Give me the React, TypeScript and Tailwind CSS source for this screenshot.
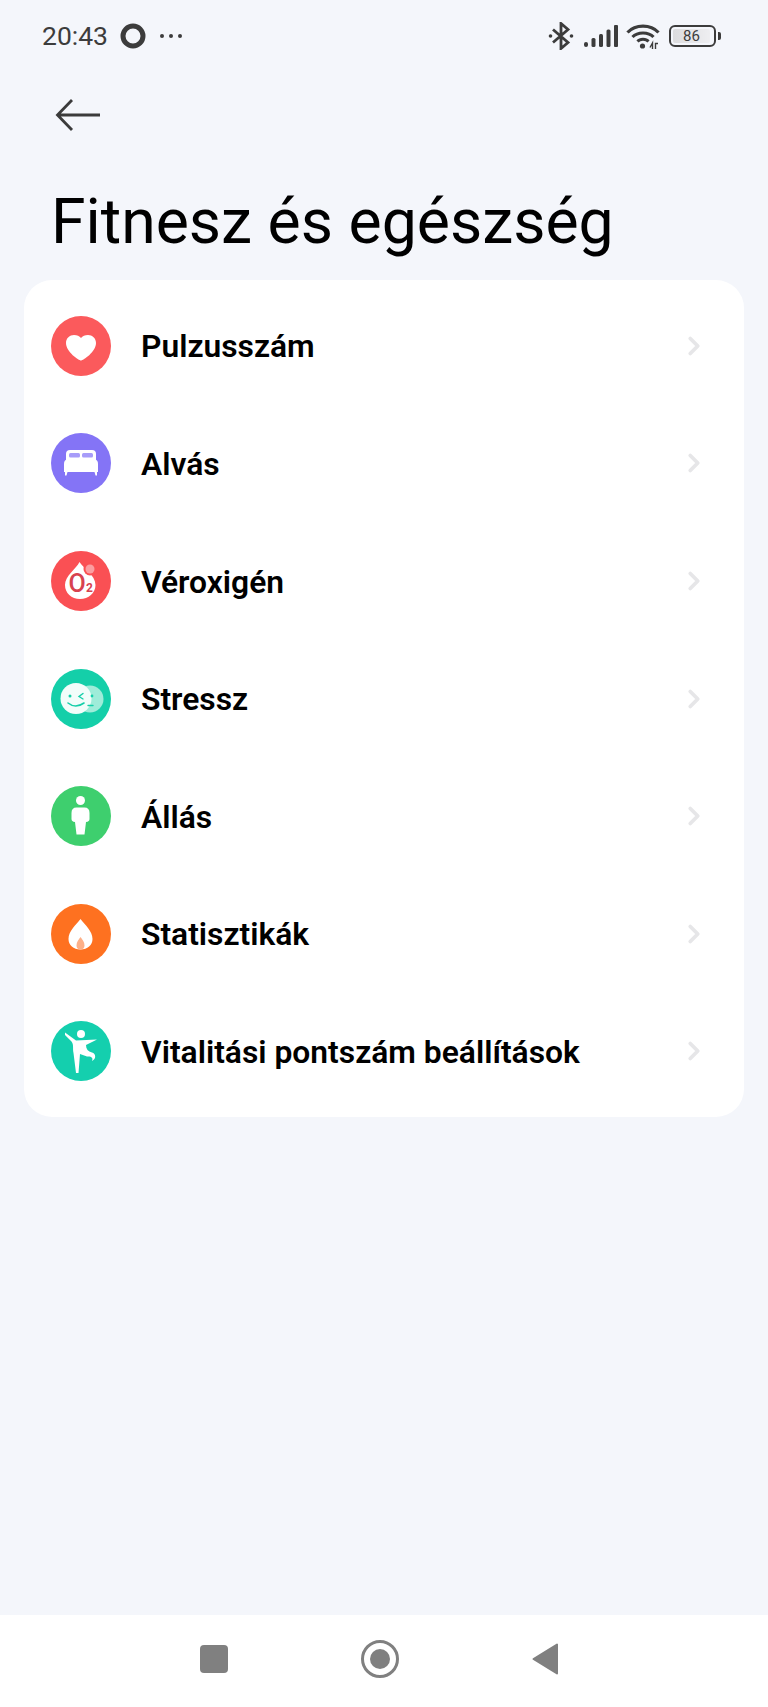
import React from 'react';
import { ChevronRight } from 'lucide-react';

const HeartIcon = () => (
  <svg viewBox="0 0 60 60" className="w-[60px] h-[60px]">
    <circle cx="30" cy="30" r="30" fill="#fb5a5c" />
    <path d="M30 44.5C28 44.5 15 36 15 27C15 22 18.8 19 23 19C26 19 28.5 20 30 22C31.5 20 34 19 37 19C41.2 19 45 22 45 27C45 36 32 44.5 30 44.5Z" fill="#fff" />
  </svg>
);

const BedIcon = () => (
  <svg viewBox="0 0 60 60" className="w-[60px] h-[60px]">
    <circle cx="30" cy="30" r="30" fill="#8474f6" />
    <path d="M15 21Q15 17 19 17H41Q45 17 45 21V27H15Z" fill="#fff" />
    <rect x="18" y="20" width="11" height="4.5" rx="1.5" fill="#a79cf9" />
    <rect x="31" y="20" width="11" height="4.5" rx="1.5" fill="#a79cf9" />
    <path d="M13 31Q13 26.5 16.5 26.5H43.5Q47 26.5 47 31V39H46V42.5H44.5L43.5 39H16.5L15.5 42.5H14V39H13Z" fill="#fff" />
  </svg>
);

const OxygenIcon = () => (
  <svg viewBox="0 0 60 60" className="w-[60px] h-[60px]">
    <circle cx="30" cy="30" r="30" fill="#fa5054" />
    <path d="M28.5 11C32 17 44.5 24 44.5 34C44.5 42 37.5 48 29 48C20.5 48 14 42 14 34C14 25 25 18 28.5 11Z" fill="#fff" />
    <circle cx="39" cy="18" r="6.5" fill="#fa5054" />
    <circle cx="39" cy="18" r="4.5" fill="#fb9da0" />
    <text x="26" y="41" textAnchor="middle" fontFamily="Roboto, sans-serif" fontSize="25" fontWeight="500" fill="#d8424f">O</text>
    <text x="38.5" y="41" textAnchor="middle" fontFamily="Roboto, sans-serif" fontSize="12" fontWeight="700" fill="#d8424f">2</text>
  </svg>
);

const StressIcon = () => (
  <svg viewBox="0 0 60 60" className="w-[60px] h-[60px]">
    <circle cx="30" cy="30" r="30" fill="#14cfa9" />
    <circle cx="39" cy="30" r="13.5" fill="#9eecd9" />
    <circle cx="25" cy="29.5" r="15.5" fill="#f2fdfa" />
    <circle cx="41" cy="27" r="1.4" fill="#14cfa9" />
    <path d="M37 36.5H42" stroke="#14cfa9" strokeWidth="1.4" strokeLinecap="round" />
    <circle cx="19" cy="27" r="1.5" fill="#14cfa9" />
    <path d="M32 24.5L28 27.5L32 30" fill="none" stroke="#14cfa9" strokeWidth="1.4" strokeLinecap="round" />
    <path d="M17 34Q24.5 40 33 34" fill="none" stroke="#14cfa9" strokeWidth="1.6" strokeLinecap="round" />
  </svg>
);

const StandIcon = () => (
  <svg viewBox="0 0 60 60" className="w-[60px] h-[60px]">
    <circle cx="30" cy="30" r="30" fill="#3ecf6e" />
    <circle cx="29.5" cy="14.5" r="4.5" fill="#fff" />
    <path d="M25.5 21.5H33.5Q38.5 21.5 38.5 27V33Q38.5 35.5 35 36L33.5 48.5H25.5L24 36Q20.5 35.5 20.5 33V27Q20.5 21.5 25.5 21.5Z" fill="#fff" />
  </svg>
);

const FlameIcon = () => (
  <svg viewBox="0 0 60 60" className="w-[60px] h-[60px]">
    <circle cx="30" cy="30" r="30" fill="#fe7120" />
    <path d="M29.5 15C34 21 41.5 27 41.5 35C41.5 41 36.5 45.5 29.5 45.5C22.5 45.5 17.5 41 17.5 35C17.5 27 25 21 29.5 15Z" fill="#fff" />
    <path d="M29.5 33C31.5 36 33.5 38 33.5 41.5C33.5 44 32 45.5 29.5 45.5C27 45.5 25.5 44 25.5 41.5C25.5 38 27.5 36 29.5 33Z" fill="#fdb088" />
  </svg>
);

const VitalityIcon = () => (
  <svg viewBox="0 0 60 60" className="w-[60px] h-[60px]">
    <circle cx="30" cy="30" r="30" fill="#14cfae" />
    <circle cx="30" cy="13" r="4" fill="#fff" />
    <path d="M14 11.5L25 19.5L46 18.5L35 24C35 28 37 30.5 41 31.5C45 32.5 45.5 38 41 40C42.5 36.5 40 35 36 35.5L29 33L27.5 52H25L22.5 32C21.5 27 23 24 20.5 20.5L14 14Z" fill="#fff" />
  </svg>
);

const rows = [
  { label: 'Pulzusszám', icon: <HeartIcon /> },
  { label: 'Alvás', icon: <BedIcon /> },
  { label: 'Véroxigén', icon: <OxygenIcon /> },
  { label: 'Stressz', icon: <StressIcon /> },
  { label: 'Állás', icon: <StandIcon /> },
  { label: 'Statisztikák', icon: <FlameIcon /> },
  { label: 'Vitalitási pontszám beállítások', icon: <VitalityIcon /> },
];

const StatusBar = () => (
  <div className="h-[72px] flex items-center justify-between pl-[42px] pr-[47px] text-[#3c3c3c]">
    <div className="flex items-center">
      <span className="text-[26.5px] leading-none mt-[1px]">20:43</span>
      <svg viewBox="0 0 26 26" className="w-[26px] h-[26px] ml-[12px]">
        <circle cx="13" cy="13" r="10" fill="none" stroke="#3c3c3c" strokeWidth="5" />
      </svg>
      <svg viewBox="0 0 24 6" className="w-[24px] h-[6px] ml-[13px] -mt-[1px]">
        <circle cx="3" cy="3" r="2" fill="#3c3c3c" />
        <circle cx="12" cy="3" r="2" fill="#3c3c3c" />
        <circle cx="21" cy="3" r="2" fill="#3c3c3c" />
      </svg>
    </div>
    <div className="flex items-center">
      <svg viewBox="0 0 26 28" className="w-[26px] h-[28px]">
        <path d="M5 7.5L20 20.5L13 26.5V1.5L20 7.5L5 20.5" fill="none" stroke="#3c3c3c" strokeWidth="2.8" />
        <circle cx="2.5" cy="14" r="1.8" fill="#3c3c3c" />
        <circle cx="23.5" cy="14" r="1.8" fill="#3c3c3c" />
      </svg>
      <svg viewBox="0 0 34 22" className="w-[34px] h-[22px] ml-[10px]">
        <rect x="0" y="17" width="4" height="5" rx="2" fill="#3c3c3c" />
        <rect x="7.5" y="13" width="4" height="9" rx="1.5" fill="#3c3c3c" />
        <rect x="15" y="9" width="4" height="13" rx="1.5" fill="#3c3c3c" />
        <rect x="22.5" y="4.5" width="4" height="17.5" rx="1.5" fill="#3c3c3c" />
        <rect x="30" y="0" width="4" height="22" rx="1" fill="#3c3c3c" />
      </svg>
      <svg viewBox="0 0 34 26" className="w-[34px] h-[26px] ml-[8px]">
        <path d="M1.5 9.5C9.5 1 24.5 1 32.5 9.5" fill="none" stroke="#3c3c3c" strokeWidth="3.2" />
        <path d="M6.5 14C11.5 8.5 22.5 8.5 27.5 14" fill="none" stroke="#3c3c3c" strokeWidth="3" />
        <path d="M11.5 18.5C14 15.5 20 15.5 22.5 18.5" fill="none" stroke="#3c3c3c" strokeWidth="2.8" />
        <circle cx="16.5" cy="23" r="2.6" fill="#3c3c3c" />
        <path d="M24 24.5L26.5 20V26M29.5 26V20.5H32" fill="none" stroke="#3c3c3c" strokeWidth="1.4" />
      </svg>
      <div className="flex items-center ml-[9px]">
        <div className="w-[47px] h-[22px] rounded-[6px] border-2 border-[#3c3c3c] p-[2px]">
          <div className="w-[37px] h-full rounded-[2px] bg-gradient-to-r from-[#dcdcde] to-[#eeeef1] flex items-center justify-center text-[15px] leading-none text-[#3c3c3c]">
            86
          </div>
        </div>
        <div className="w-[3px] h-[8px] ml-[2px] rounded-r-[2px] bg-[#3c3c3c]" />
      </div>
    </div>
  </div>
);

export default function App() {
  return (
    <div className="w-[768px] h-[1707px] flex flex-col bg-[#f4f6fb] font-['Roboto',sans-serif] overflow-hidden">
      <StatusBar />

      <div className="pl-[55px] pt-[26px]">
        <svg viewBox="0 0 46 34" className="w-[46px] h-[34px]">
          <path d="M45 17H3M17 2L2.5 17L17 32" fill="none" stroke="#3b3b3b" strokeWidth="2.8" />
        </svg>
      </div>

      <h1 className="pl-[51px] mt-[55px] text-[62.5px] leading-[70px] font-normal text-black">
        Fitnesz és egészség
      </h1>

      <div className="mx-[24px] mt-[23px] pt-[7px] pb-[7px] bg-white rounded-[28px]">
        {rows.map(row => (
          <div key={row.label} className="h-[117.6px] flex items-center pl-[27px] pr-[35px]">
            {row.icon}
            <span className="ml-[30px] mt-[3px] text-[31.8px] font-semibold text-black flex-1">{row.label}</span>
            <ChevronRight className="w-[30px] h-[30px] text-[#e6e6e8]" strokeWidth={3} />
          </div>
        ))}
      </div>

      <div className="mt-auto h-[92px] bg-white flex items-center">
        <div className="w-[28px] h-[28px] ml-[200px] rounded-[4px] bg-[#808080] -mt-[5px]" />
        <div className="w-[38px] h-[38px] ml-[133px] rounded-full border-[3px] border-[#808080] flex items-center justify-center -mt-[5px]">
          <div className="w-[20px] h-[20px] rounded-full bg-[#808080]" />
        </div>
        <svg viewBox="0 0 27 32" className="w-[27px] h-[32px] ml-[133px] -mt-[5px]">
          <path d="M25 1.5V30.5L1.5 16Z" fill="#808080" stroke="#808080" strokeWidth="2" strokeLinejoin="round" />
        </svg>
      </div>
    </div>
  );
}
